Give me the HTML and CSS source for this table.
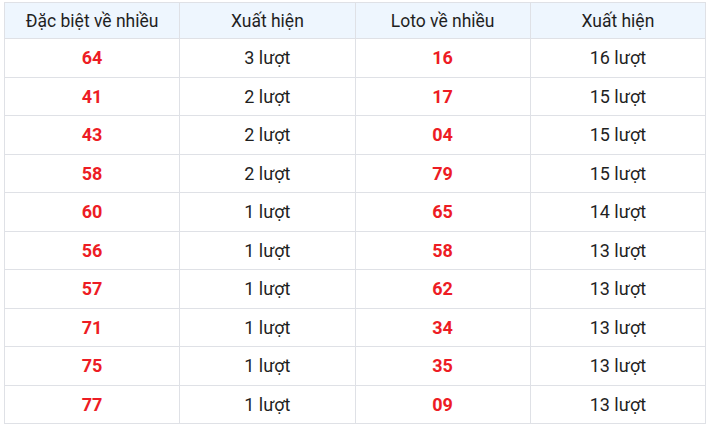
FILE: index.html
```html
<!DOCTYPE html>
<html lang="vi">
<head>
<meta charset="utf-8">
<link rel="stylesheet" href="styles.css">
</head>
<body>
<div class="wrap">
<table class="stats">
<thead>
<tr><th>Đặc biệt về nhiều</th><th>Xuất hiện</th><th>Loto về nhiều</th><th>Xuất hiện</th></tr>
</thead>
<tbody>
<tr><td class="num">64</td><td>3 lượt</td><td class="num">16</td><td>16 lượt</td></tr>
<tr><td class="num">41</td><td>2 lượt</td><td class="num">17</td><td>15 lượt</td></tr>
<tr><td class="num">43</td><td>2 lượt</td><td class="num">04</td><td>15 lượt</td></tr>
<tr><td class="num">58</td><td>2 lượt</td><td class="num">79</td><td>15 lượt</td></tr>
<tr><td class="num">60</td><td>1 lượt</td><td class="num">65</td><td>14 lượt</td></tr>
<tr><td class="num">56</td><td>1 lượt</td><td class="num">58</td><td>13 lượt</td></tr>
<tr><td class="num">57</td><td>1 lượt</td><td class="num">62</td><td>13 lượt</td></tr>
<tr><td class="num">71</td><td>1 lượt</td><td class="num">34</td><td>13 lượt</td></tr>
<tr><td class="num">75</td><td>1 lượt</td><td class="num">35</td><td>13 lượt</td></tr>
<tr><td class="num">77</td><td>1 lượt</td><td class="num">09</td><td>13 lượt</td></tr>
</tbody>
</table>
</div>
</body>
</html>
```
FILE: styles.css
```css
html, body {
  margin: 0;
  padding: 0;
  background: #fff;
}
.wrap {
  padding: 2px 7px 0 4px;
}
.stats {
  width: 702px;
  border-collapse: collapse;
  table-layout: fixed;
  font-family: Roboto, "Liberation Sans", sans-serif;
  color: #1f1f1f;
}
.stats th, .stats td {
  border: 1px solid #dfe1e6;
  text-align: center;
  padding: 0;
}
.stats th {
  background: #eef6fe;
  font-weight: 400;
  font-size: 17.5px;
  height: 35px;
}
.stats td {
  font-size: 18px;
  height: 37.5px;
}
.stats td.num {
  color: #ed1c24;
  font-weight: 700;
  font-size: 18px;
}
```
